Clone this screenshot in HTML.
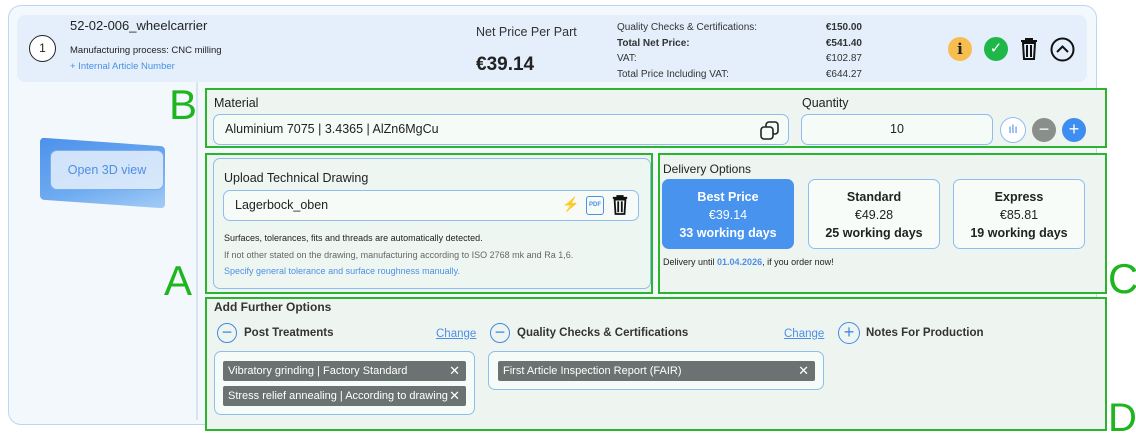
<!DOCTYPE html>
<html><head><meta charset="utf-8"><style>
*{box-sizing:border-box;margin:0;padding:0}
body{width:1136px;height:435px;background:#fff;font-family:"Liberation Sans",sans-serif;position:relative;overflow:hidden;color:#222}
.a{position:absolute}
.g{border:2px solid #2cb52c;position:absolute;background:#eef5f0}
.L{position:absolute;color:#1fb51f;font-size:42px;font-family:"Liberation Sans",sans-serif;line-height:1}
.box{position:absolute;border:1.5px solid #8fbdf0;border-radius:7px;background:#f5fbf7}
.opt{position:absolute;border:1.5px solid #8fbdf0;border-radius:7px;background:#f8fcf9;text-align:center;font-size:12.5px;line-height:18px;padding-top:8px}
.opt b{font-weight:bold}
.chip{position:absolute;background:#6b7372;color:#fff;font-size:11px;height:20px;line-height:20px;padding-left:5px;border-radius:2px}
.chip b{position:absolute;right:6px;top:0;font-weight:normal;font-size:13px}
.circ{position:absolute;width:20px;height:20px;border:1.5px solid #3f8ae6;border-radius:50%;color:#3f8ae6;text-align:center;line-height:16px;font-size:18px}
</style></head><body>
<div class="a" style="left:8px;top:5px;width:1089px;height:420px;border:1.5px solid #bcd6f4;border-radius:13px;background:#f3f8fd"></div>
<div class="a" style="left:17px;top:15px;width:1070px;height:67px;background:#e4effb;border-radius:8px"></div>
<div class="a" style="left:29px;top:35px;width:27px;height:27px;border:1.3px solid #222;border-radius:50%;text-align:center;line-height:25px;font-size:12px;background:#fff">1</div>
<div class="a" style="left:70px;top:18px;font-size:13px">52-02-006_wheelcarrier</div>
<div class="a" style="left:70px;top:45px;font-size:9.5px">Manufacturing process: CNC milling</div>
<div class="a" style="left:70px;top:61px;font-size:9.5px;color:#4b8fe6">+ Internal Article Number</div>
<div class="a" style="left:476px;top:25px;font-size:12.5px;color:#333">Net Price Per Part</div>
<div class="a" style="left:476px;top:54px;font-size:19px;font-weight:bold">€39.14</div>
<div class="a" style="left:617px;top:20px;font-size:10px;line-height:15.5px;color:#333">Quality Checks &amp; Certifications:<br><b>Total Net Price:</b><br>VAT:<br>Total Price Including VAT:</div>
<div class="a" style="left:780px;top:20px;width:82px;text-align:right;font-size:10px;line-height:15.5px;color:#333"><b>€150.00</b><br><b>€541.40</b><br>€102.87<br>€644.27</div>
<div class="a" style="left:948px;top:37px;width:24px;height:24px;border-radius:50%;background:#f7bd4f;text-align:center;font:bold 15px/24px 'DejaVu Serif',serif">i</div>
<div class="a" style="left:984px;top:37px;width:24px;height:24px;border-radius:50%;background:#1fb64a;color:#fff;text-align:center;font-size:15px;line-height:24px">✓</div>
<svg class="a" style="left:1019px;top:37px" width="20" height="24" viewBox="0 0 20 24"><path d="M2 4h16M7 4V2h6v2M4 6l1 16h10l1-16z M8 8v12M12 8v12" fill="none" stroke="#111" stroke-width="2"/></svg>
<svg class="a" style="left:1050px;top:37px" width="25" height="25" viewBox="0 0 25 25"><circle cx="12.5" cy="12.5" r="11" fill="none" stroke="#111" stroke-width="2"/><path d="M7 15l5.5-5.5L18 15" fill="none" stroke="#111" stroke-width="2"/></svg>
<div class="a" style="left:196px;top:82px;width:1.5px;height:338px;background:#d8e4ef"></div>
<!-- 3D -->
<div class="a" style="left:40px;top:142px;width:125px;height:62px;background:linear-gradient(160deg,#3a86e8,#5fa2ef 60%,#9cc8f5);transform:skewY(4deg);border-radius:4px;opacity:.9"></div>
<div class="a" style="left:50px;top:150px;width:114px;height:40px;border:1.5px solid #7aaef0;border-radius:7px;background:rgba(230,240,252,.85);color:#4d8fe6;font-size:12.5px;text-align:center;line-height:38px">Open 3D view</div>
<!-- B -->
<div class="g" style="left:205px;top:88px;width:902px;height:60px"></div>
<div class="L" style="left:169px;top:84px">B</div>
<div class="a" style="left:214px;top:96px;font-size:12.5px">Material</div>
<div class="box" style="left:213px;top:114px;width:576px;height:31px;font-size:12.5px;padding:7px 11px">Aluminium 7075 | 3.4365 | AlZn6MgCu</div>
<svg class="a" style="left:759px;top:120px" width="22" height="22" viewBox="0 0 22 22"><rect x="7" y="2" width="12" height="12" rx="3" fill="none" stroke="#222" stroke-width="1.6"/><rect x="2" y="7" width="12" height="12" rx="3" fill="#f5fbf7" stroke="#222" stroke-width="1.6"/></svg>
<div class="a" style="left:802px;top:96px;font-size:12.5px">Quantity</div>
<div class="box" style="left:801px;top:114px;width:192px;height:31px;font-size:12.5px;text-align:center;line-height:28px">10</div>
<div class="a" style="left:1000px;top:117px;width:26px;height:26px;border:1.5px solid #8fbdf0;border-radius:50%;background:#fff;text-align:center;color:#4d8fe6;font-size:12px;line-height:23px">ılı</div>
<div class="a" style="left:1032px;top:118px;width:24px;height:24px;border-radius:50%;background:#8a8f8c;color:#fff;text-align:center;font-size:18px;line-height:22px">−</div>
<div class="a" style="left:1062px;top:118px;width:24px;height:24px;border-radius:50%;background:#3d8ef0;color:#fff;text-align:center;font-size:18px;line-height:22px">+</div>
<!-- A -->
<div class="g" style="left:205px;top:153px;width:448px;height:141px"></div>
<div class="L" style="left:164px;top:260px">A</div>
<div class="box" style="left:213px;top:158px;width:438px;height:131px;background:#eef6f2"></div>
<div class="a" style="left:224px;top:171px;font-size:12.5px">Upload Technical Drawing</div>
<div class="box" style="left:223px;top:190px;width:416px;height:31px;font-size:12.5px;padding:7px 11px;background:#f6fbf8">Lagerbock_oben</div>
<div class="a" style="left:562px;top:196px;color:#4d8fe6;font-size:14px">⚡</div>
<div class="a" style="left:586px;top:196px;width:18px;height:19px;border:1.5px solid #4d8fe6;border-radius:3px;color:#4d8fe6;font-size:6px;font-weight:bold;text-align:center;line-height:16px">PDF</div>
<svg class="a" style="left:611px;top:194px" width="18" height="22" viewBox="0 0 20 24"><path d="M2 4h16M7 4V2h6v2M4 6l1 16h10l1-16z M8 8v12M12 8v12" fill="none" stroke="#111" stroke-width="2"/></svg>
<div class="a" style="left:224px;top:233px;font-size:9px;color:#222">Surfaces, tolerances, fits and threads are automatically detected.</div>
<div class="a" style="left:224px;top:250px;font-size:9px;color:#666">If not other stated on the drawing, manufacturing according to ISO 2768 mk and Ra 1,6.</div>
<div class="a" style="left:224px;top:266px;font-size:9px;color:#4d8fe6">Specify general tolerance and surface roughness manually.</div>
<!-- C -->
<div class="g" style="left:658px;top:153px;width:449px;height:141px"></div>
<div class="L" style="left:1108px;top:258px">C</div>
<div class="a" style="left:663px;top:162px;font-size:12px">Delivery Options</div>
<div class="opt" style="left:662px;top:179px;width:132px;height:70px;background:#4793ee;border-color:#4793ee;color:#fff"><b>Best Price</b><br>€39.14<br><b>33 working days</b></div>
<div class="opt" style="left:808px;top:179px;width:132px;height:70px"><b>Standard</b><br>€49.28<br><b>25 working days</b></div>
<div class="opt" style="left:953px;top:179px;width:132px;height:70px"><b>Express</b><br>€85.81<br><b>19 working days</b></div>
<div class="a" style="left:663px;top:257px;font-size:9px">Delivery until <b style="color:#4d8fe6">01.04.2026</b>, if you order now!</div>
<!-- D -->
<div class="g" style="left:205px;top:297px;width:902px;height:134px"></div>
<div class="L" style="left:1108px;top:398px;font-size:40px">D</div>
<div class="a" style="left:214px;top:300px;font-size:12px;font-weight:bold;color:#333">Add Further Options</div>
<div class="circ" style="left:217px;top:323px">−</div>
<div class="a" style="left:244px;top:327px;font-size:11.5px;font-weight:bold;color:#333">Post Treatments</div>
<div class="a" style="left:436px;top:328px;font-size:11.5px;color:#4d8fe6;text-decoration:underline">Change</div>
<div class="box" style="left:214px;top:351px;width:261px;height:64px"></div>
<div class="chip" style="left:223px;top:361px;width:243px">Vibratory grinding | Factory Standard<b>✕</b></div>
<div class="chip" style="left:223px;top:386px;width:243px">Stress relief annealing | According to drawing<b>✕</b></div>
<div class="circ" style="left:490px;top:323px">−</div>
<div class="a" style="left:517px;top:327px;font-size:11.5px;font-weight:bold;color:#333">Quality Checks &amp; Certifications</div>
<div class="a" style="left:784px;top:328px;font-size:11.5px;color:#4d8fe6;text-decoration:underline">Change</div>
<div class="box" style="left:488px;top:351px;width:336px;height:39px"></div>
<div class="chip" style="left:498px;top:361px;width:317px">First Article Inspection Report (FAIR)<b>✕</b></div>
<div class="circ" style="left:838px;top:322px;width:22px;height:22px;line-height:18px">+</div>
<div class="a" style="left:866px;top:327px;font-size:11.5px;font-weight:bold;color:#333">Notes For Production</div>
</body></html>
